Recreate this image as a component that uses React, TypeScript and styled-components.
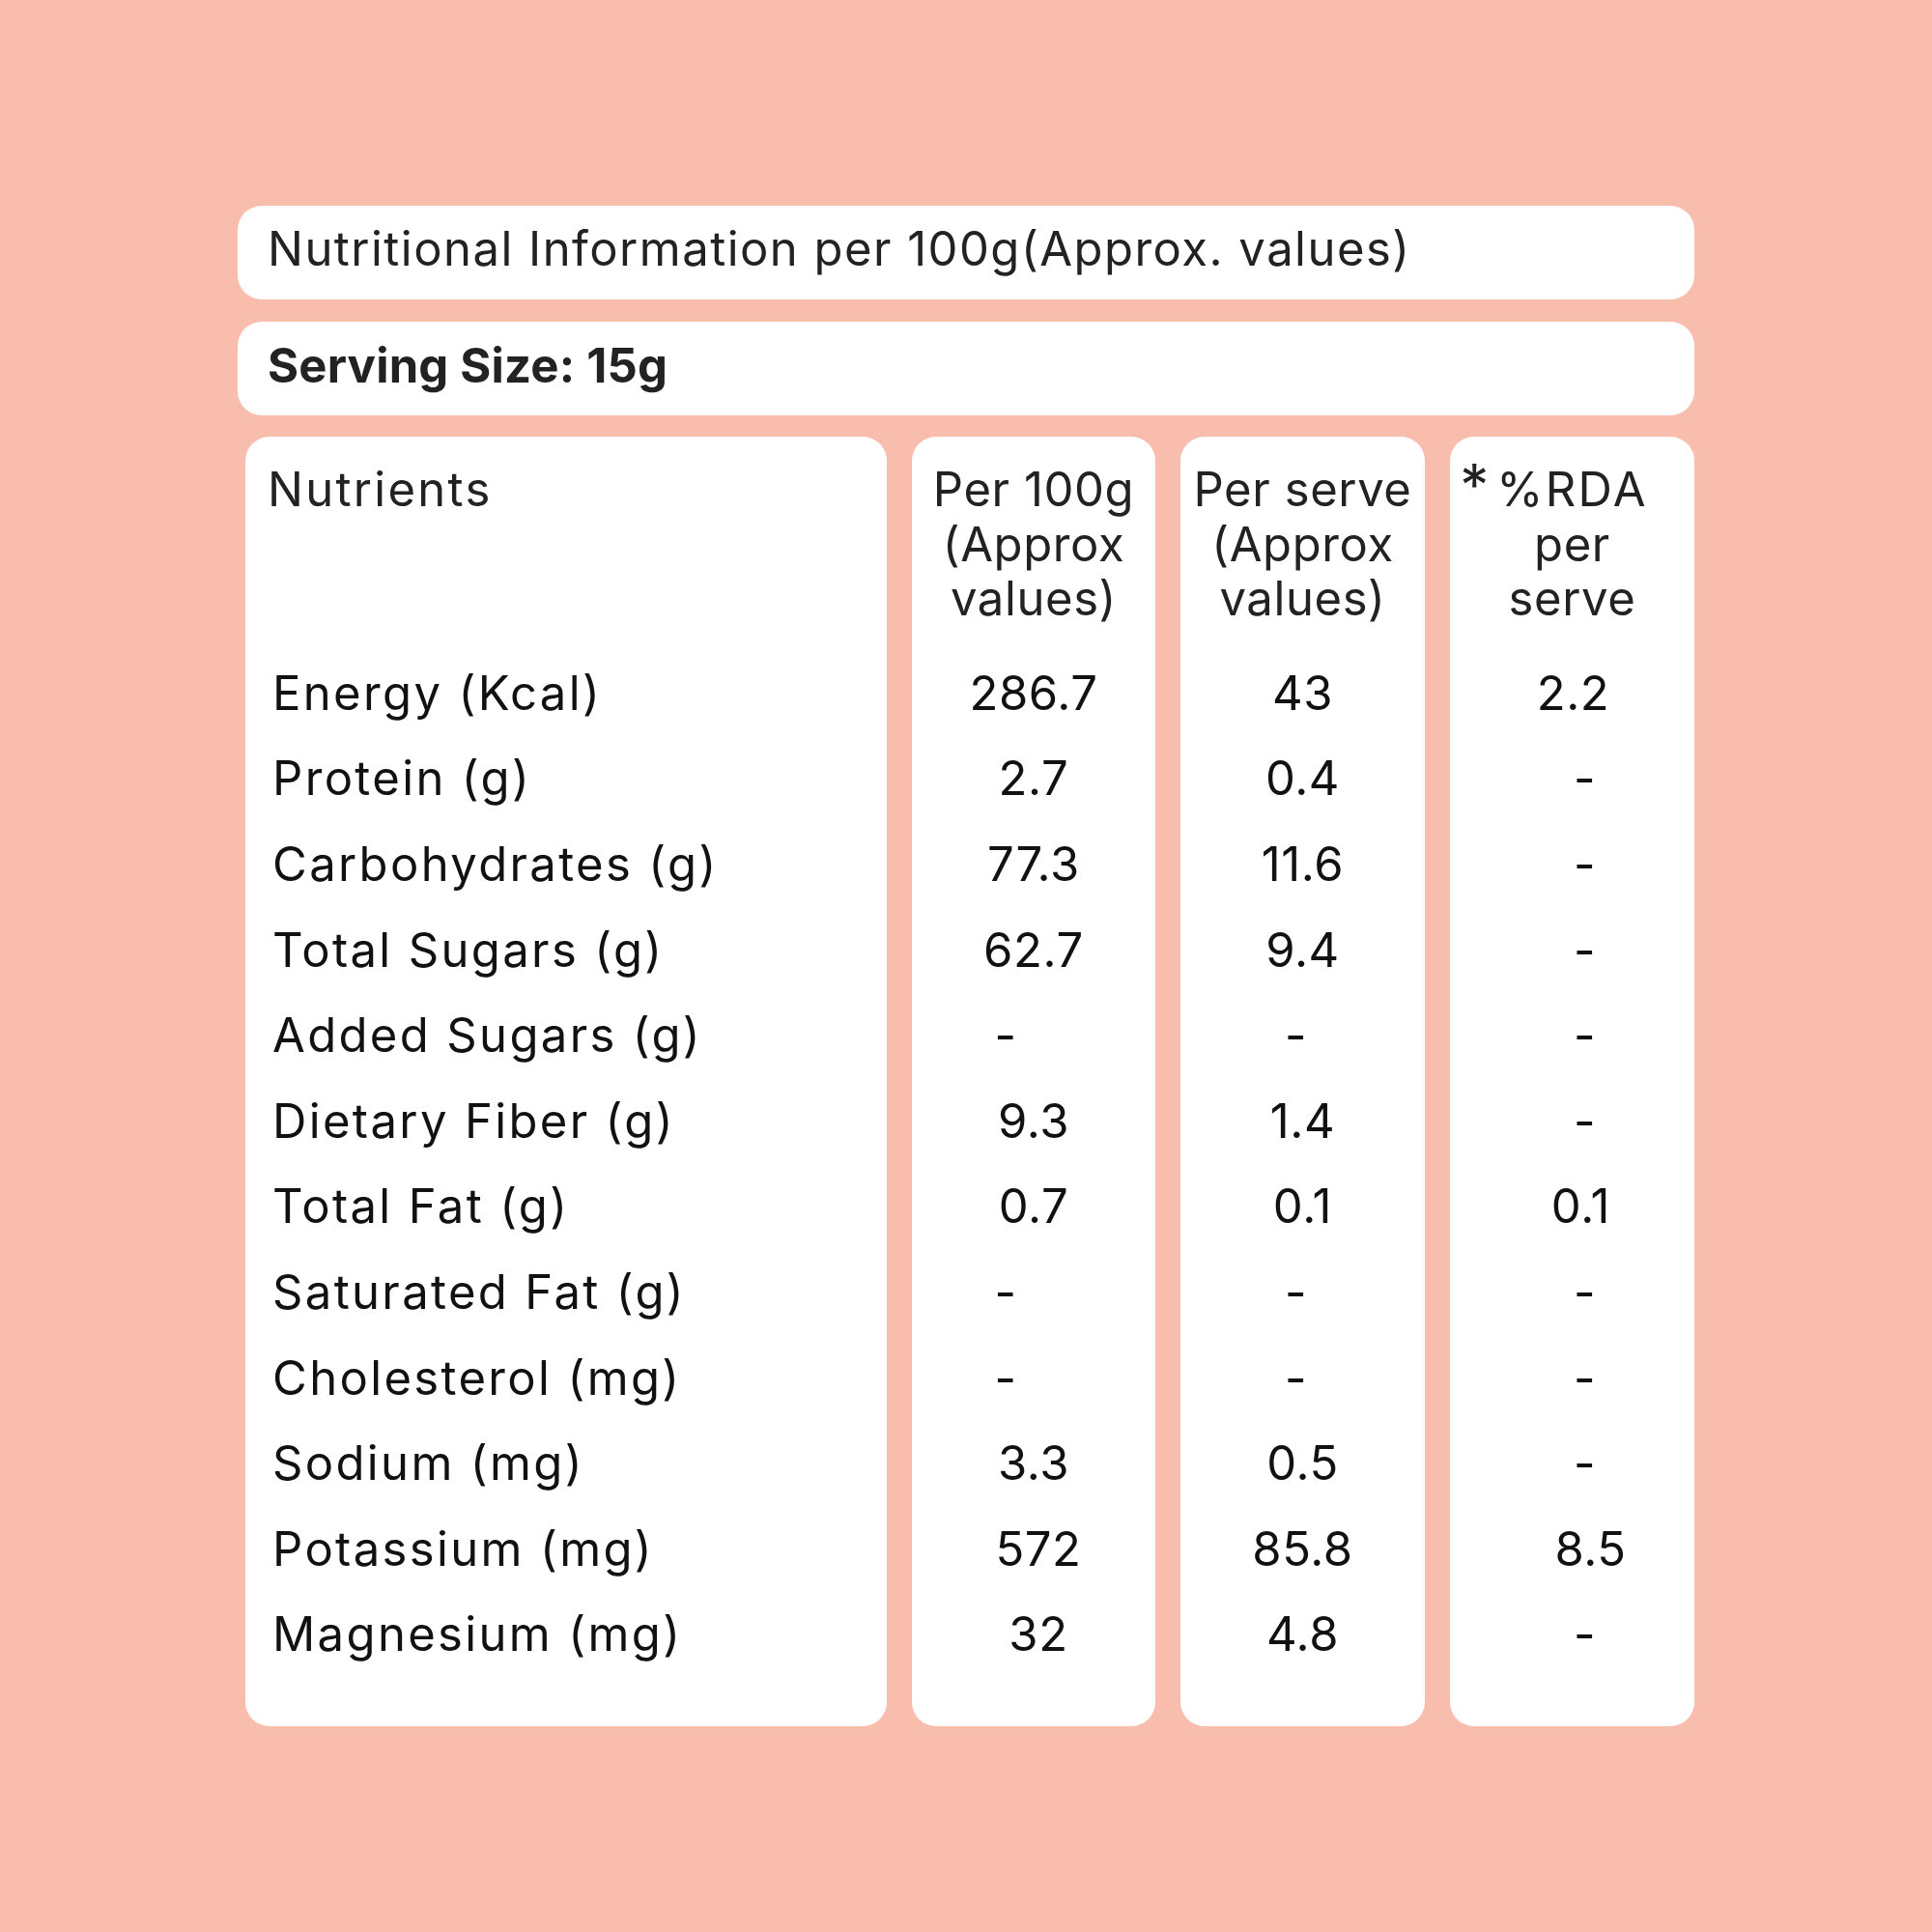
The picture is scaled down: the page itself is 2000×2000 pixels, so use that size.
import * as React from 'react';
import styled, { createGlobalStyle } from 'styled-components';

const GlobalStyle = createGlobalStyle`
    html, body {
        margin: 0;
        padding: 0;
        background: #f9bdad;
    }
    body {
        font-family: Inter, 'Open Sans', sans-serif;
        color: #1f1f1f;
    }
`;

const Page = styled.div`
    width: 2000px;
    height: 2000px;
    box-sizing: border-box;
    padding: 213px 0 0 246px;
    background: #f9bdad;
`;

const Sheet = styled.div`
    width: 1508px;
    display: flex;
    flex-direction: column;
`;

const Banner = styled.div<{ $bold?: boolean }>`
    height: 97px;
    box-sizing: border-box;
    display: flex;
    align-items: center;
    padding: 0 0 ${(p) => (p.$bold ? 6 : 8)}px 31px;
    margin-bottom: ${(p) => (p.$bold ? 22 : 23)}px;
    background: #ffffff;
    border-radius: 25px;

    font-size: 49px;
    font-weight: ${(p) => (p.$bold ? 700 : 400)};
    letter-spacing: ${(p) => (p.$bold ? '0.2px' : '1.47px')};
    color: #222222;
    white-space: nowrap;
`;

const Table = styled.div`
    display: flex;
    gap: 26px;
    padding-left: 8px;
`;

const Card = styled.div<{ $width: number }>`
    width: ${(p) => p.$width}px;
    box-sizing: border-box;
    display: flex;
    flex-direction: column;
    padding: 27px 0 51px;
    background: #ffffff;
    border-radius: 25px;
`;

const Head = styled.div<{ $align: 'left' | 'center' }>`
    height: 170px;
    margin-bottom: 24px;
    padding-left: ${(p) => (p.$align === 'left' ? 23 : 0)}px;
    text-align: ${(p) => p.$align};
    font-size: 49px;
    line-height: 56.5px;
    letter-spacing: ${(p) => (p.$align === 'left' ? 2.3 : 0.6)}px;
    color: #222222;
    white-space: nowrap;
`;

const WideLine = styled.div`
    letter-spacing: 2.4px;
`;

const Star = styled.span`
    display: inline-block;
    width: 0;
    margin-left: -38px;
    margin-right: 38px;
    font-size: 60px;
    line-height: 0;
`;

const Cell = styled.div<{ $label?: boolean; $shift?: number }>`
    height: 88.6px;
    display: flex;
    align-items: center;
    justify-content: ${(p) => (p.$label ? 'flex-start' : 'center')};
    padding-left: ${(p) => (p.$label ? 28 : Math.max(0, (p.$shift ?? 0) * 2))}px;
    padding-right: ${(p) => (p.$label ? 0 : Math.max(0, -(p.$shift ?? 0) * 2))}px;
    font-size: 49px;
    letter-spacing: ${(p) => (p.$label ? 2.35 : 0.6)}px;
    color: #111111;
    white-space: nowrap;
`;

type Value = string | [string, number];

const rows: { name: string; values: Value[] }[] = [
    { name: 'Energy (Kcal)', values: ['286.7', '43', ['2.2', 1]] },
    { name: 'Protein (g)', values: ['2.7', '0.4', '-'] },
    { name: 'Carbohydrates (g)', values: ['77.3', '11.6', '-'] },
    { name: 'Total Sugars (g)', values: ['62.7', '9.4', '-'] },
    { name: 'Added Sugars (g)', values: ['-', '-', '-'] },
    { name: 'Dietary Fiber (g)', values: ['9.3', '1.4', '-'] },
    { name: 'Total Fat (g)', values: ['0.7', '0.1', ['0.1', 9]] },
    { name: 'Saturated Fat (g)', values: ['-', '-', '-'] },
    { name: 'Cholesterol (mg)', values: ['-', '-', '-'] },
    { name: 'Sodium (mg)', values: ['3.3', '0.5', '-'] },
    { name: 'Potassium (mg)', values: [['572', 5], '85.8', ['8.5', 19]] },
    { name: 'Magnesium (mg)', values: [['32', 5], '4.8', '-'] },
];

// dashes sit a little off the column centre in the original
const dashShift = [-29, -7, 13];

const columns = [
    { width: 252, head: ['Per 100g', '(Approx', 'values)'] },
    { width: 253, head: ['Per serve', '(Approx', 'values)'] },
    { width: 253, head: null },
];

const readValue = (v: Value, col: number): [string, number] => {
    if (Array.isArray(v)) return v;
    return [v, v === '-' ? dashShift[col] : 0];
};

export default function App() {
    return (
        <Page>
            <GlobalStyle />
            <Sheet>
                <Banner>Nutritional Information per 100g(Approx. values)</Banner>
                <Banner $bold>Serving Size: 15g</Banner>
                <Table>
                    <Card $width={664}>
                        <Head $align="left">Nutrients</Head>
                        {rows.map((r) => (
                            <Cell key={r.name} $label>
                                {r.name}
                            </Cell>
                        ))}
                    </Card>
                    {columns.map((c, i) => (
                        <Card key={i} $width={c.width}>
                            <Head $align="center">
                                {c.head ? (
                                    c.head.map((line) => <div key={line}>{line}</div>)
                                ) : (
                                    <>
                                        <WideLine>
                                            <Star>*</Star>%RDA
                                        </WideLine>
                                        <div>per</div>
                                        <div>serve</div>
                                    </>
                                )}
                            </Head>
                            {rows.map((r) => {
                                const [text, shift] = readValue(r.values[i], i);
                                return (
                                    <Cell key={r.name} $shift={shift}>
                                        {text}
                                    </Cell>
                                );
                            })}
                        </Card>
                    ))}
                </Table>
            </Sheet>
        </Page>
    );
}
